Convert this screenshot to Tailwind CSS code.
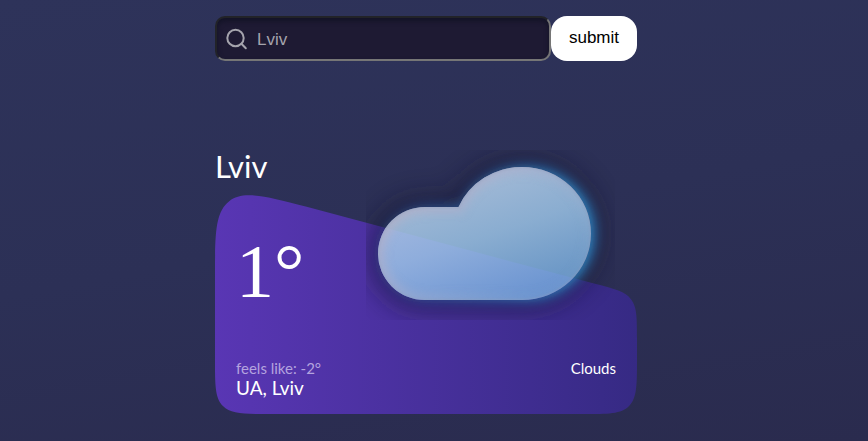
<!DOCTYPE html>
<html lang="en">
<head>
<meta charset="utf-8">
<meta name="viewport" content="width=device-width, initial-scale=1">
<title>Weather in Lviv</title>
<script src="https://cdn.jsdelivr.net/npm/@tailwindcss/browser@4"></script>
</head>
<body class="min-h-screen bg-[linear-gradient(170deg,#2e335a_0%,#2c3056_50%,#2a2b4e_100%)] pt-4 pr-4 font-['Lato',sans-serif] text-white">
<main class="mx-auto w-full max-w-[422px]">
  <form class="flex h-[45px] font-['Liberation_Sans',sans-serif] text-[17px]">
    <div class="relative flex min-w-0 flex-1">
      <label for="city" aria-label="City" class="absolute top-3 left-[11px]">
        <svg class="size-[22px]" viewBox="0 0 22 22" fill="none" stroke="#a5a4ad" stroke-width="2" stroke-linecap="round" aria-hidden="true">
          <circle cx="9.5" cy="10" r="8.2"/><path d="M15.4 15.8 19.8 20.2"/>
        </svg>
      </label>
      <input id="city" type="text" placeholder="Lviv" aria-label="City" class="w-full min-w-0 rounded-[10px] border-2 border-t-[#222328] border-r-[#767676] border-b-[#767676] border-l-[#222328] bg-[#1e1a33] pt-0.5 pl-10 shadow-[inset_0_3px_5px_#131326] outline-none placeholder:text-[#a5a4ad]">
    </div>
    <button type="submit" class="w-[86px] rounded-2xl bg-white pb-0.5 text-black">submit</button>
  </form>

  <section class="relative mt-[86px]">
    <h1 class="text-[31px] leading-[38px]">Lviv</h1>
    <article class="relative mt-[10px] flex h-[219px] flex-col justify-between px-[21px] pt-[34px] pb-4">
      <svg class="absolute inset-0 h-full w-full" viewBox="0 0 342 175" preserveAspectRatio="none" aria-hidden="true">
        <defs><linearGradient id="card"><stop stop-color="#5936b4"/><stop offset="1" stop-color="#362a84"/></linearGradient></defs>
        <path fill="url(#card)" d="M0 66.44C0 31.455 0 13.963 11.326 5.13C22.652-3.703 39.603.618 73.504 9.26L307.903 71.014C324.259 75.184 332.437 77.269 337.218 83.412C342 89.555 342 97.995 342 114.874V131C342 151.742 342 162.113 335.556 168.556C329.113 175 318.742 175 298 175H44C23.258 175 12.887 175 6.444 168.556C0 162.113 0 151.742 0 131Z"/>
      </svg>
      <p class="relative font-['Liberation_Serif',serif] text-[76px] leading-[84px]">1°</p>
      <div class="relative flex items-start justify-between">
        <div>
          <p class="text-[15px] leading-[19px] text-[#b4a3df]">feels like: -2°</p>
          <p class="text-[19px] leading-[20px]">UA, Lviv</p>
        </div>
        <p class="text-[15px] leading-[19px]">Clouds</p>
      </div>
    </article>
    <svg class="absolute top-[3px] right-[22px] h-[170px] w-[249px]" viewBox="0 0 249 170" role="img" aria-label="Cloud">
      <defs>
        <path id="shape" d="M59 57H92.5A69 66.5 0 0 1 156 17A69 66.5 0 0 1 225 83.5A69 66.5 0 0 1 156 150H59A47 46.5 0 0 1 59 57Z"/>
        <clipPath id="inside"><use href="#shape"/></clipPath>
        <mask id="outside" maskUnits="userSpaceOnUse" x="0" y="0" width="249" height="170"><path fill="#fff" d="M0 0H249V170H0Z"/><use href="#shape" fill="#000"/></mask>
        <linearGradient id="fill" gradientUnits="userSpaceOnUse" x1="100" y1="25" x2="145" y2="160"><stop stop-color="#b4cde8" stop-opacity=".88"/><stop offset=".45" stop-color="#9cc5e8" stop-opacity=".84"/><stop offset="1" stop-color="#72abe0" stop-opacity=".8"/></linearGradient>
        <linearGradient id="glow"><stop offset=".1" stop-color="#2a55a0" stop-opacity=".55"/><stop offset=".9" stop-color="#2d7dbb"/></linearGradient>
        <linearGradient id="rim" x1="0" y1="0" x2="1" y2=".7"><stop stop-color="#c8aeba"/><stop offset=".45" stop-color="#adaecb"/><stop offset="1" stop-color="#8daaca" stop-opacity=".2"/></linearGradient>
        <filter id="soft" filterUnits="userSpaceOnUse" x="-60" y="-60" width="370" height="290"><feGaussianBlur stdDeviation="13"/></filter>
        <filter id="halo" filterUnits="userSpaceOnUse" x="-60" y="-60" width="370" height="290" color-interpolation-filters="sRGB"><feGaussianBlur stdDeviation="6"/></filter>
        <filter id="edge" filterUnits="userSpaceOnUse" x="-60" y="-60" width="370" height="290"><feGaussianBlur stdDeviation="5"/></filter>
        <filter id="thin" filterUnits="userSpaceOnUse" x="-60" y="-60" width="370" height="290"><feGaussianBlur stdDeviation="1"/></filter>
      </defs>
      <g mask="url(#outside)">
        <use href="#shape" fill="#17162f" stroke="#17162f" stroke-width="24" opacity=".48" filter="url(#soft)"/>
        <use href="#shape" transform="translate(3 0)" fill="url(#glow)" stroke="url(#glow)" stroke-width="3" filter="url(#halo)"/>
      </g>
      <use href="#shape" fill="url(#fill)"/>
      <g clip-path="url(#inside)">
        <use href="#shape" fill="none" stroke="url(#rim)" stroke-width="12" opacity=".6" filter="url(#edge)"/>
        <use href="#shape" fill="none" stroke="#8f9cbc" stroke-width="2" opacity=".5" filter="url(#thin)"/>
      </g>
    </svg>
  </section>
</main>
</body>
</html>
